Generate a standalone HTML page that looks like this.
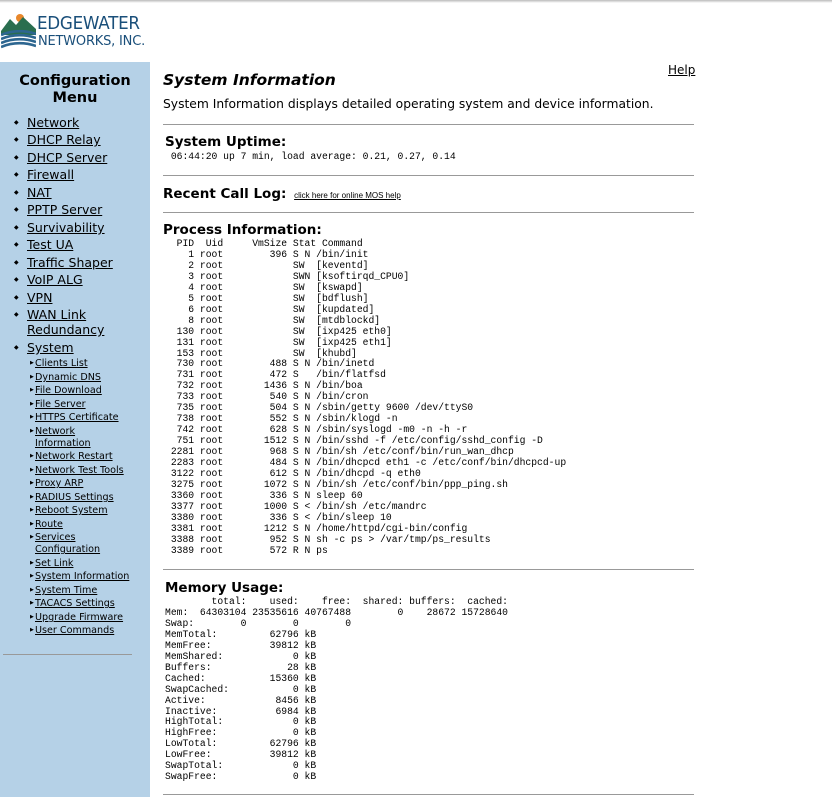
<!DOCTYPE html>
<html><head><meta charset="utf-8"><style>
body{margin:0;width:832px;height:797px;overflow:hidden;background:#fff;font-family:"DejaVu Sans","Liberation Sans",sans-serif;color:#000;position:relative}
.top{position:absolute;left:0;top:0;width:832px;height:3px;background:linear-gradient(#bbb,#fff)}
.side{position:absolute;left:0;top:62px;width:150px;height:735px;background:#b5d1e7}
.side h2{margin:0;position:absolute;top:11px;left:0;width:150px;text-align:center;font-size:14.5px;line-height:17px;font-weight:bold}
a{color:#000;text-decoration:underline}
.m{position:absolute;left:13px;font-size:12.5px;line-height:15px}
.m:before{content:"\25C6";font-size:6px;position:absolute;left:1px;top:4px;line-height:8px}
.m a{margin-left:14px;display:inline-block}
.s{position:absolute;left:30px;font-size:9.6px;line-height:12px}
.s:before{content:"\25B6";font-size:5px;position:absolute;left:0;top:1px;line-height:8px}
.s a{margin-left:5px;display:inline-block}
.hr{position:absolute;left:163px;width:531px;height:1px;background:#999}
pre{position:absolute;margin:0;font-family:"Liberation Mono",monospace;font-size:9.7px;line-height:10.95px}
.h{position:absolute;font-weight:bold;font-size:13.5px;font-family:"DejaVu Sans","Liberation Sans",sans-serif}
</style></head><body>
<div class="top"></div>
<svg style="position:absolute;left:1px;top:13px" width="35" height="38" viewBox="0 0 35 38">
<circle cx="19" cy="5" r="4" fill="#e8872b"/>
<path d="M0 18 L9 6 L15 12 L22 4 L35 16 L35 22 L0 22Z" fill="#2a6e4f"/>
<path d="M0 22 Q17 15 35 21 M0 26 Q17 19 35 25 M0 30 Q17 23 35 29 M0 34 Q17 27 35 33" stroke="#2d6690" stroke-width="2.6" fill="none"/>
</svg>
<div style="position:absolute;left:37px;top:14px;font-size:18px;letter-spacing:-0.3px;color:#1a4f7a;font-family:'DejaVu Sans',sans-serif;line-height:20px;transform:scaleX(0.93);transform-origin:left">EDGEWATER</div>
<div style="position:absolute;left:38px;top:34px;font-size:13px;color:#1a4f7a;line-height:16px;letter-spacing:-0.2px">NETWORKS, INC.</div>

<div class="side"><h2>Configuration<br>Menu</h2>
<div style="position:absolute;left:3px;top:592px;width:129px;height:1px;background:#999"></div></div>
<div class="m" style="top:115px"><a>Network</a></div>
<div class="m" style="top:132px"><a>DHCP Relay</a></div>
<div class="m" style="top:150px"><a>DHCP Server</a></div>
<div class="m" style="top:167px"><a>Firewall</a></div>
<div class="m" style="top:185px"><a>NAT</a></div>
<div class="m" style="top:202px"><a>PPTP Server</a></div>
<div class="m" style="top:220px"><a>Survivability</a></div>
<div class="m" style="top:237px"><a>Test UA</a></div>
<div class="m" style="top:255px"><a>Traffic Shaper</a></div>
<div class="m" style="top:272px"><a>VoIP ALG</a></div>
<div class="m" style="top:290px"><a>VPN</a></div>
<div class="m" style="top:307px;line-height:15px"><a>WAN Link<br>Redundancy</a></div>
<div class="m" style="top:340px"><a>System</a></div>
<div class="s" style="top:358px"><a>Clients List</a></div>
<div class="s" style="top:372px"><a>Dynamic DNS</a></div>
<div class="s" style="top:385px"><a>File Download</a></div>
<div class="s" style="top:399px"><a>File Server</a></div>
<div class="s" style="top:412px"><a>HTTPS Certificate</a></div>
<div class="s" style="top:426px"><a>Network<br>Information</a></div>
<div class="s" style="top:451px"><a>Network Restart</a></div>
<div class="s" style="top:465px"><a>Network Test Tools</a></div>
<div class="s" style="top:478px"><a>Proxy ARP</a></div>
<div class="s" style="top:492px"><a>RADIUS Settings</a></div>
<div class="s" style="top:505px"><a>Reboot System</a></div>
<div class="s" style="top:519px"><a>Route</a></div>
<div class="s" style="top:532px"><a>Services<br>Configuration</a></div>
<div class="s" style="top:558px"><a>Set Link</a></div>
<div class="s" style="top:571px"><a>System Information</a></div>
<div class="s" style="top:585px"><a>System Time</a></div>
<div class="s" style="top:598px"><a>TACACS Settings</a></div>
<div class="s" style="top:612px"><a>Upgrade Firmware</a></div>
<div class="s" style="top:625px"><a>User Commands</a></div>

<div style="position:absolute;left:163px;top:71px;font-size:15.5px;font-weight:bold;font-style:italic">System Information</div>
<div style="position:absolute;left:668px;top:63px;font-size:12px"><a>Help</a></div>
<div style="position:absolute;left:163px;top:97px;font-size:12.3px">System Information displays detailed operating system and device information.</div>
<div class="hr" style="top:124px"></div>
<div class="h" style="left:165px;top:134px">System Uptime:</div>
<pre style="left:165px;top:152px"> 06:44:20 up 7 min, load average: 0.21, 0.27, 0.14</pre>
<div class="hr" style="top:175px"></div>
<div class="h" style="left:163px;top:186px">Recent Call Log: <a style="font-weight:normal;font-size:8px;font-family:'Liberation Sans',sans-serif;margin-left:3px">click here for online MOS help</a></div>
<div class="hr" style="top:212px"></div>
<div class="h" style="left:163px;top:222px">Process Information:</div>
<pre style="left:165px;top:239px">  PID  Uid     VmSize Stat Command
    1 root        396 S N /bin/init
    2 root            SW  [keventd]
    3 root            SWN [ksoftirqd_CPU0]
    4 root            SW  [kswapd]
    5 root            SW  [bdflush]
    6 root            SW  [kupdated]
    8 root            SW  [mtdblockd]
  130 root            SW  [ixp425 eth0]
  131 root            SW  [ixp425 eth1]
  153 root            SW  [khubd]
  730 root        488 S N /bin/inetd
  731 root        472 S   /bin/flatfsd
  732 root       1436 S N /bin/boa
  733 root        540 S N /bin/cron
  735 root        504 S N /sbin/getty 9600 /dev/ttyS0
  738 root        552 S N /sbin/klogd -n
  742 root        628 S N /sbin/syslogd -m0 -n -h -r
  751 root       1512 S N /bin/sshd -f /etc/config/sshd_config -D
 2281 root        968 S N /bin/sh /etc/conf/bin/run_wan_dhcp
 2283 root        484 S N /bin/dhcpcd eth1 -c /etc/conf/bin/dhcpcd-up
 3122 root        612 S N /bin/dhcpd -q eth0
 3275 root       1072 S N /bin/sh /etc/conf/bin/ppp_ping.sh
 3360 root        336 S N sleep 60
 3377 root       1000 S < /bin/sh /etc/mandrc
 3380 root        336 S < /bin/sleep 10
 3381 root       1212 S N /home/httpd/cgi-bin/config
 3388 root        952 S N sh -c ps > /var/tmp/ps_results
 3389 root        572 R N ps</pre>
<div class="hr" style="top:569px"></div>
<div class="h" style="left:165px;top:580px">Memory Usage:</div>
<pre style="left:165px;top:597px">        total:    used:    free:  shared: buffers:  cached:
Mem:  64303104 23535616 40767488        0    28672 15728640
Swap:        0        0        0
MemTotal:         62796 kB
MemFree:          39812 kB
MemShared:            0 kB
Buffers:             28 kB
Cached:           15360 kB
SwapCached:           0 kB
Active:            8456 kB
Inactive:          6984 kB
HighTotal:            0 kB
HighFree:             0 kB
LowTotal:         62796 kB
LowFree:          39812 kB
SwapTotal:            0 kB
SwapFree:             0 kB</pre>
<div class="hr" style="top:794px"></div>
</body></html>
